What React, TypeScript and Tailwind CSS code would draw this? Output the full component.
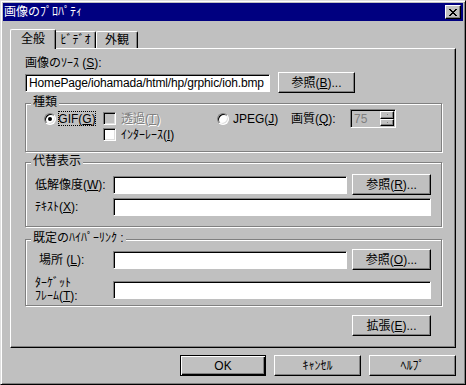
import React from "react";

const raised =
  "border border-t-white border-l-white border-r-black border-b-black shadow-[inset_-1px_-1px_0_#808080]";
const sunken =
  "border border-t-[#808080] border-l-[#808080] border-r-white border-b-white shadow-[inset_1px_1px_0_#000]";

const Btn: React.FC<{ className?: string; isDefault?: boolean; children: React.ReactNode }> = ({
  className = "",
  isDefault = false,
  children,
}) => (
  <div
    className={`flex items-center justify-center bg-[#c0c0c0] h-[21px] ${
      isDefault
        ? "border border-black shadow-[inset_1px_1px_0_#fff,inset_-1px_-1px_0_#000,inset_-2px_-2px_0_#808080]"
        : raised
    } ${className}`}
  >
    {children}
  </div>
);

const Field: React.FC<{ className?: string; children?: React.ReactNode }> = ({ className = "", children }) => (
  <div className={`h-[18px] bg-white flex items-center pl-[3px] overflow-hidden whitespace-nowrap ${sunken} ${className}`}>
    {children}
  </div>
);

const Group: React.FC<{ title: string; className?: string; children: React.ReactNode }> = ({
  title,
  className = "",
  children,
}) => (
  <div className={`relative border border-[#808080] shadow-[inset_1px_1px_0_#fff,1px_1px_0_#fff] ${className}`}>
    <span className="absolute left-[5px] -top-[8px] bg-[#c0c0c0] px-[2px] leading-[12px]">{title}</span>
    {children}
  </div>
);

const Radio: React.FC<{ checked?: boolean }> = ({ checked }) => (
  <span className="w-[12px] h-[12px] shrink-0 rounded-full bg-white border border-t-[#808080] border-l-[#808080] border-r-white border-b-white shadow-[inset_1px_1px_0_#000,inset_-1px_-1px_0_#dfdfdf] flex items-center justify-center">
    {checked && <span className="w-[4px] h-[4px] rounded-full bg-black" />}
  </span>
);

const Check: React.FC<{ disabled?: boolean }> = ({ disabled }) => (
  <span
    className={`w-[13px] h-[13px] shrink-0 ${disabled ? "bg-[#c0c0c0]" : "bg-white"} border border-t-[#808080] border-l-[#808080] border-r-white border-b-white shadow-[inset_1px_1px_0_#000,inset_-1px_-1px_0_#dfdfdf]`}
  />
);

const CloseGlyph = () => (
  <svg width="8" height="7" viewBox="0 0 8 7">
    <path
      d="M0 0h2v1h-2zM6 0h2v1h-2zM1 1h2v1h-2zM5 1h2v1h-2zM2 2h4v1h-4zM3 3h2v1h-2zM2 4h4v1h-4zM1 5h2v1h-2zM5 5h2v1h-2zM0 6h2v1h-2zM6 6h2v1h-2z"
      fill="#000"
    />
  </svg>
);

const App: React.FC = () => {
  return (
    <div className="w-[466px] h-[385px] bg-[#c0c0c0] border border-t-[#dfdfdf] border-l-[#dfdfdf] border-r-black border-b-black shadow-[inset_1px_1px_0_#fff,inset_-1px_-1px_0_#808080] p-[2px] flex flex-col text-[12px] leading-[12px] text-black [font-family:'Liberation_Sans','Noto_Sans_CJK_JP',sans-serif]">
      {/* title bar */}
      <div className="h-[18px] bg-[#000080] flex items-center justify-between pl-[1px] pr-[2px]">
        <span className="text-white">画像のﾌﾟﾛﾊﾟﾃｨ</span>
        <div className={`w-[16px] h-[14px] bg-[#c0c0c0] flex items-center justify-center ${raised}`}>
          <CloseGlyph />
        </div>
      </div>

      <div className="flex flex-col px-[7px] pt-[7px]">
        {/* tabs */}
        <div className="flex items-end h-[20px]">
          <div className="relative z-10 -mb-px h-[20px] w-[46px] bg-[#c0c0c0] border-l border-t border-r border-l-white border-t-white border-r-black rounded-t-[2px] shadow-[inset_-1px_0_0_#808080] flex items-center justify-center pb-[2px]">
            全般
          </div>
          <div className="h-[17px] w-[40px] bg-[#c0c0c0] border-t border-r border-t-white border-r-black rounded-tr-[2px] shadow-[inset_-1px_0_0_#808080] flex items-center justify-center">
            ﾋﾞﾃﾞｵ
          </div>
          <div className="h-[17px] w-[42px] bg-[#c0c0c0] border-l border-t border-r border-l-white border-t-white border-r-black rounded-t-[2px] shadow-[inset_-1px_0_0_#808080] flex items-center justify-center">
            外観
          </div>
        </div>

        {/* tab panel */}
        <div className={`h-[300px] pl-[14px] pr-[13px] flex flex-col ${raised}`}>
          <div className="mt-[8px]">
            画像のｿｰｽ (<u>S</u>):
          </div>
          <div className="mt-[3px] flex items-center h-[21px]">
            <Field className="w-[245px] tracking-[-0.15px]">HomePage/iohamada/html/hp/grphic/ioh.bmp</Field>
            <Btn className="ml-[8px] w-[77px]">
              参照(<u>B</u>)...
            </Btn>
          </div>

          {/* 種類 */}
          <Group title="種類" className="mt-[10px] h-[49px]">
            <div className="flex items-start pt-[5px] pl-[18px]">
              <div className="w-[59px] h-[19px] flex items-center">
                <Radio checked />
                <span className="ml-[2px] w-[38px] h-[15px] border border-dotted border-black flex items-center justify-center">
                  GIF(<u>G</u>)
                </span>
              </div>
              <div className="w-[114px] flex flex-col gap-[3px] mt-[3px]">
                <div className="flex items-center">
                  <Check disabled />
                  <span className="ml-[5px] text-[#808080] [text-shadow:1px_1px_0_#fff]">
                    透過(<u>T</u>)
                  </span>
                </div>
                <div className="flex items-center">
                  <Check />
                  <span className="ml-[5px]">
                    ｲﾝﾀｰﾚｰｽ(<u>I</u>)
                  </span>
                </div>
              </div>
              <div className="w-[74px] h-[19px] flex items-center">
                <Radio />
                <span className="ml-[4px]">
                  JPEG(<u>J</u>)
                </span>
              </div>
              <div className="w-[59px] h-[19px] flex items-center">
                画質(<u>Q</u>):
              </div>
              <div className={`w-[46px] h-[19px] p-[1px] bg-[#c0c0c0] flex items-stretch ${sunken}`}>
                <span className="flex-1 flex items-center pl-[2px] text-[#808080]">75</span>
                <div className="w-[14px] flex flex-col">
                  <div className={`flex-1 flex items-center justify-center ${raised}`}>
                    <span className="w-[1px] h-[1px] bg-[#808080]" />
                  </div>
                  <div className={`flex-1 flex items-center justify-center ${raised}`}>
                    <span className="w-[1px] h-[1px] bg-[#808080]" />
                  </div>
                </div>
              </div>
            </div>
          </Group>

          {/* 代替表示 */}
          <Group title="代替表示" className="mt-[10px] h-[65px]">
            <div className="flex flex-col pt-[11px] pl-[9px]">
              <div className="flex items-center h-[21px]">
                <span className="w-[78px]">
                  低解像度(<u>W</u>):
                </span>
                <Field className="w-[234px]" />
                <Btn className="ml-[5px] w-[79px]">
                  参照(<u>R</u>)...
                </Btn>
              </div>
              <div className="mt-[3px] flex items-center">
                <span className="w-[78px]">
                  ﾃｷｽﾄ(<u>X</u>):
                </span>
                <Field className="w-[318px]" />
              </div>
            </div>
          </Group>

          {/* 既定のハイパーリンク */}
          <Group title="既定のﾊｲﾊﾟｰﾘﾝｸ :" className="mt-[12px] h-[67px]">
            <div className="flex flex-col pt-[9px] pl-[9px]">
              <div className="flex items-center h-[21px]">
                <span className="w-[78px] pl-[4px]">
                  場所 (<u>L</u>):
                </span>
                <Field className="w-[234px]" />
                <Btn className="ml-[5px] w-[79px]">
                  参照(<u>O</u>)...
                </Btn>
              </div>
              <div className="mt-[7px] flex items-center">
                <div className="w-[78px] flex flex-col leading-[13px]">
                  <span>ﾀｰｹﾞｯﾄ</span>
                  <span>
                    ﾌﾚｰﾑ(<u>T</u>):
                  </span>
                </div>
                <Field className="w-[318px]" />
              </div>
            </div>
          </Group>

          <div className="mt-[9px] flex justify-end pr-[11px]">
            <Btn className="w-[79px]">
              拡張(<u>E</u>)...
            </Btn>
          </div>
        </div>

        {/* dialog buttons */}
        <div className="mt-[7px] flex justify-end gap-[8px]">
          <Btn isDefault className="w-[86px]">
            OK
          </Btn>
          <Btn className="w-[87px]">ｷｬﾝｾﾙ</Btn>
          <Btn className="w-[87px]">ﾍﾙﾌﾟ</Btn>
        </div>
      </div>
    </div>
  );
};

export default App;
